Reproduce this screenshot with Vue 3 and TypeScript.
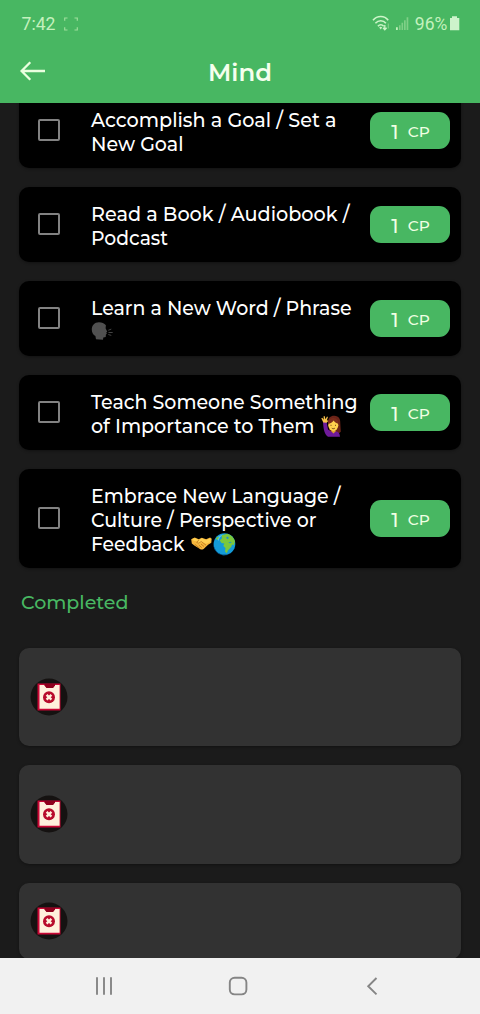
<script setup lang="ts">
type Emoji = 'speaking' | 'raising' | 'handshake' | 'globe'

interface Line {
  text: string
  width: number
  emojis?: { name: Emoji; x: number }[]
}

interface Task {
  id: number
  points: number
  lines: Line[]
}

const tasks: Task[] = [
  {
    id: 1,
    points: 1,
    lines: [
      { text: 'Accomplish a Goal / Set a', width: 245.5 },
      { text: 'New Goal', width: 92.5 },
    ],
  },
  {
    id: 2,
    points: 1,
    lines: [
      { text: 'Read a Book / Audiobook /', width: 258.5 },
      { text: 'Podcast', width: 77 },
    ],
  },
  {
    id: 3,
    points: 1,
    lines: [
      { text: 'Learn a New Word / Phrase', width: 260.5 },
      { text: '', width: 0, emojis: [{ name: 'speaking', x: 0 }] },
    ],
  },
  {
    id: 4,
    points: 1,
    lines: [
      { text: 'Teach Someone Something', width: 266.5 },
      { text: 'of Importance to Them', width: 223.5, emojis: [{ name: 'raising', x: 229 }] },
    ],
  },
  {
    id: 5,
    points: 1,
    lines: [
      { text: 'Embrace New Language /', width: 249.5 },
      { text: 'Culture / Perspective or', width: 225.5 },
      {
        text: 'Feedback',
        width: 93.5,
        emojis: [
          { name: 'handshake', x: 99.5 },
          { name: 'globe', x: 122.5 },
        ],
      },
    ],
  },
]

const completed: number[] = [1, 2, 3]
</script>

<template>
  <div class="screen">
    <header class="header">
      <div class="status">
        <svg class="clock" width="60" height="24">
          <text x="21.5" y="18" textLength="34" lengthAdjust="spacingAndGlyphs">7:42</text>
        </svg>
        <svg class="capture" width="14" height="14" viewBox="0 0 14 14">
          <path d="M.7 3.8V1H3.5M10.5 1h2.8v2.8M13.3 10.2V13h-2.8M3.5 13H.7v-2.8" />
        </svg>
        <svg class="indicators" width="108" height="24" viewBox="0 0 108 24">
          <g class="wifi">
            <path d="M1 8.2C5.2 3.3 12.4 3.3 16.2 8.2M3.4 11.3c3-3.4 7.8-3.4 10.5 0M5.9 14.2c1.8-2 4.1-2 5.8 0" />
            <path class="solid" d="M7.2 15.5a2 2 0 0 1 3 0L8.7 17.4z" />
            <path class="thin" d="M12.8 13v5M11 15.8l1.8 2 1.8-2" />
            <path class="dim" d="M16.3 11.5v5" />
          </g>
          <g class="signal">
            <path class="on" d="M24 15.2h1.8V18H24z" />
            <path d="M27 13.2h1.6V18H27zM29.5 10.8h1.6V18h-1.6zM32 8.2h1.7V18H32zM34.6 5.2h1.7V18h-1.7z" />
          </g>
          <text x="42.8" y="18.2" textLength="32.5" lengthAdjust="spacingAndGlyphs">96%</text>
          <path class="battery" d="M80 4.2h5V6h2.3v12.3H78V6h2z" />
        </svg>
      </div>
      <div class="toolbar">
        <svg class="back" width="26" height="22" viewBox="0 0 26 22">
          <path d="M10.3 2.2 1.6 11l8.7 8.8M1.6 11H25" />
        </svg>
        <svg class="title" width="64" height="30">
          <text x="0" y="23" textLength="64" lengthAdjust="spacingAndGlyphs">Mind</text>
        </svg>
      </div>
    </header>

    <main class="content">
      <ul class="list">
        <li v-for="task in tasks" :key="task.id" class="card">
          <span class="checkbox"></span>
          <div class="label">
            <svg v-for="(line, i) in task.lines" :key="i" class="line" width="268" height="23.7">
              <text
                v-if="line.text"
                x="0"
                y="17.6"
                :textLength="line.width"
                lengthAdjust="spacingAndGlyphs"
              >{{ line.text }}</text>
              <g
                v-for="emoji in line.emojis"
                :key="emoji.name"
                :transform="`translate(${emoji.x} 0)`"
              >
                <g v-if="emoji.name === 'speaking'">
                  <path
                    fill="#505050"
                    d="M8 1.2C3.4 1.2.7 4.4.8 8.7c0 3 1.4 5 3.6 6.3L5 18.2l7 .6.3-2.4 2.4-.3.2-2.5 1-.8-.7-1.3 1-.8-1.6-3.500.3-3C13.3 2.200 10.800 1.200 8 1.200z"
                  />
                  <path class="voice" d="m17.3 9.3 3-1.2M17.5 11.5h4.2M17.3 13.5l3 .9" />
                </g>
                <g v-else-if="emoji.name === 'raising'">
                  <path fill="#6c2418" d="M8 7.500C8 2.500 11 .5 14.500 .8c4.200.2 6 3.300 5.800 7.500l.5 8.500-2.500 2H10z" />
                  <path fill="#6f1b9a" d="m3 7 3.500-.5 1.500 8 3 2h5.500c2.300.5 3.300 2.200 3.500 5.200H8C4.600 19.500 3.400 14 3 7z" />
                  <path fill="#f9c34a" d="m3.300 7.500-2-4.200 1-.5 1.500 2-.2-3.500 1-.2.9 3.200L7 1.500l.9.500-1 3.200 1.500.5-1.700 2z" />
                  <path fill="#e2a32f" d="M11.500 14h4v2.500l-2 2-2-2z" />
                  <ellipse cx="13.3" cy="10.2" rx="5" ry="5.7" fill="#ffd14e" />
                  <path fill="#7b2c1b" d="M8 9C8 3.800 11 2.800 13.800 3c3 .2 4.600 2.200 4.800 6-2.500-.7-4.200-2-5-3.400C12.500 7.300 10.500 8.500 8 9z" />
                  <path class="face" d="M11 9.800v1M15.500 9.800v1M11.800 13.200c1 .7 2 .7 3 0" />
                </g>
                <g v-else-if="emoji.name === 'handshake'">
                  <path
                    fill="#f6b73c"
                    d="M.7 6.200 4.200 4.500l4 1.700 3.100-1.500 4.300 1.500 4-1.700 1.600 1.200-.4 4-3.200 2-4.500 4.200c-1.500 1-2.500.9-3.600 0L4.200 12.700 1.300 10.500z"
                  />
                  <path fill="#ffd052" d="m1.500 6 3-.8 3.600 1.600 3.200-1.200 4.400 1.500 3.600-1.500.9.8-.5 2.900-4.200 1.500-4.200-1.600-2.500 1.500-2.500-.4 1-2.200L3.500 8z" />
                  <path class="crease" d="m8.500 6.500-2.200 3.200 2 .5 2.500-1.700 4.700 3.700M10.500 11l3 2.500M8.300 12l3 2.700M4.300 11.300l5 4" />
                </g>
                <g v-else>
                  <circle cx="11" cy="11" r="10.8" fill="#149bd8" />
                  <path fill="#0870bd" d="M1.400 6.200A10.800 10.800 0 0 0 18 19.400 10.700 10.700 0 0 1 1.400 6.200z" />
                  <path fill="#52c4f2" d="M3.200 5.500A10 10 0 0 1 10.500 1.500C7 3 5.500 5 5.200 8z" />
                  <path
                    fill="#7cc83b"
                    d="m8.500 2.200 5.200-1.400c3.800.9 6.800 3.800 7.800 7.500l-1.200 3.900-1.700-.7-.9 2.500-3.200 3.200-1.200 3-1.800-1.800.5-3.300-2.200-2 1-2.700-2.800-.3-1.700-2.600 2.500-2.600-.8-1.200zM2.200 5.700l2-2 1.300.5-1.500 2.700z"
                  />
                  <path fill="#2491c9" d="m12.500 4.400 2-.8.8 1.700-1.600 1zM14.800 9.500l2.600-.8.8.8-2 .8z" />
                </g>
              </g>
            </svg>
          </div>
          <div class="badge">
            <svg width="80" height="37">
              <text class="points" x="21.3" y="27">{{ task.points }}</text>
              <text class="unit" x="37.8" y="25.3" textLength="22" lengthAdjust="spacingAndGlyphs">CP</text>
            </svg>
          </div>
        </li>
      </ul>

      <h2 class="section">
        <svg width="110" height="26">
          <text x="0" y="18" textLength="107.5" lengthAdjust="spacingAndGlyphs">Completed</text>
        </svg>
      </h2>

      <ul class="list">
        <li v-for="item in completed" :key="item" class="card done" :class="{ short: item === 3 }">
          <svg class="ticket" width="38" height="38" viewBox="0 0 38 38">
            <circle cx="19" cy="19" r="18.5" fill="#151211" />
            <path fill="#c90635" d="M7.500 5.500h23v27h-23z" />
            <path fill="#fff0dc" d="M9.500 7h5l2 2.700H23L25 7h4.600v23.700H9.500z" />
            <path fill="#8f001d" d="M14.500 6H25v1.500l-2 2.400h-6.500l-2-2.400z" />
            <circle cx="19" cy="19.2" r="6" fill="#b80b2c" />
            <path class="cross" d="m16.600 16.800 4.800 4.800M21.400 16.800l-4.800 4.800" />
          </svg>
        </li>
      </ul>
    </main>

    <nav class="navbar">
      <svg width="480" height="56" viewBox="0 0 480 56">
        <path d="M97 19.300v17.500M104 19.300v17.500M111 19.300v17.500" />
        <rect x="229.8" y="19.8" width="16.6" height="16.6" rx="4.8" />
        <path d="m376.500 20-8.300 8.200 8.300 8.200" />
      </svg>
    </nav>
  </div>
</template>

<style>
body {
  margin: 0;
  background: #1b1b1b;
}
</style>

<style scoped>
.screen {
  display: flex;
  flex-direction: column;
  width: 480px;
  height: 1014px;
  overflow: hidden;
  background: #1b1b1b;
  font-family: Montserrat, Inter, 'Liberation Sans', sans-serif;
}

svg {
  display: block;
  flex: none;
  overflow: visible;
}

.header {
  flex: none;
  height: 103px;
  background: #48b762;
  z-index: 1;
}

.status {
  display: flex;
  align-items: center;
  height: 24px;
  padding-top: 12px;
}

.status text {
  fill: #c4f1bd;
  font: 400 18px Roboto, sans-serif;
}

.capture {
  margin-left: 4px;
  fill: none;
  stroke: #9ddd9b;
  stroke-width: 1.2;
}

.indicators {
  margin-left: 294px;
}

.wifi {
  fill: none;
  stroke: #cdf5c9;
  stroke-width: 1.6;
}

.wifi .solid {
  fill: #cdf5c9;
  stroke: none;
}

.wifi .thin {
  stroke-width: 1.3;
}

.wifi .dim {
  stroke: #7fd087;
  stroke-width: 1.1;
}

.signal {
  fill: #7fd087;
}

.signal .on {
  fill: #c4f1bd;
}

.battery {
  fill: #cdf3cb;
}

.toolbar {
  display: flex;
  height: 67px;
}

.back {
  margin: 24px 0 0 20px;
  fill: none;
  stroke: #eaffdf;
  stroke-width: 2.3;
}

.title {
  margin: 22px 0 0 162px;
}

.title text {
  fill: #f5ffed;
  font-size: 24.5px;
  font-weight: 600;
}

.content {
  flex: 1;
  min-height: 0;
  overflow: hidden;
}

.list {
  display: flex;
  flex-direction: column;
  gap: 19.1px;
  margin: -10.4px 19px 0;
  padding: 0;
  list-style: none;
}

.card {
  display: flex;
  align-items: center;
  box-sizing: border-box;
  min-height: 75px;
  border-radius: 10px;
  background: #000;
  box-shadow: 0 1px 3px rgba(0, 0, 0, 0.35);
}

.checkbox {
  flex: none;
  box-sizing: border-box;
  width: 22px;
  height: 22px;
  margin-left: 19px;
  border: 2px solid #828282;
  border-radius: 2px;
}

.label {
  width: 268px;
  margin-left: 31px;
  padding: 16.3px 0 11.3px;
}

.line text {
  fill: #fff;
  font-size: 19.6px;
  font-weight: 500;
}

.voice {
  fill: none;
  stroke: #444;
  stroke-width: 1;
}

.face {
  fill: none;
  stroke: #714118;
  stroke-width: 1;
}

.crease {
  fill: none;
  stroke: #ba751d;
  stroke-width: 0.8;
}

.badge {
  flex: none;
  width: 80px;
  height: 37px;
  margin-left: 11px;
  border-radius: 11px;
  background: #48b762;
}

.points {
  fill: #f0ffe3;
  font-size: 19.6px;
  font-weight: 500;
}

.unit {
  fill: #f0ffe3;
  font-size: 15px;
  font-weight: 500;
}

.section {
  height: 26px;
  margin: 23.5px 0 30.4px 20.5px;
}

.section text {
  fill: #48b762;
  font-size: 19.3px;
  font-weight: 500;
}

.section + .list {
  margin-top: 0;
}

.done {
  flex: none;
  height: 98.5px;
  background: #323232;
}

.short {
  height: 76px;
}

.ticket {
  margin-left: 11px;
}

.cross {
  fill: none;
  stroke: #fff0dc;
  stroke-width: 2.4;
}

.navbar {
  flex: none;
  height: 56px;
  background: #f1f1f1;
  z-index: 1;
}

.navbar path,
.navbar rect {
  fill: none;
  stroke: #858585;
  stroke-width: 1.9;
}
</style>
